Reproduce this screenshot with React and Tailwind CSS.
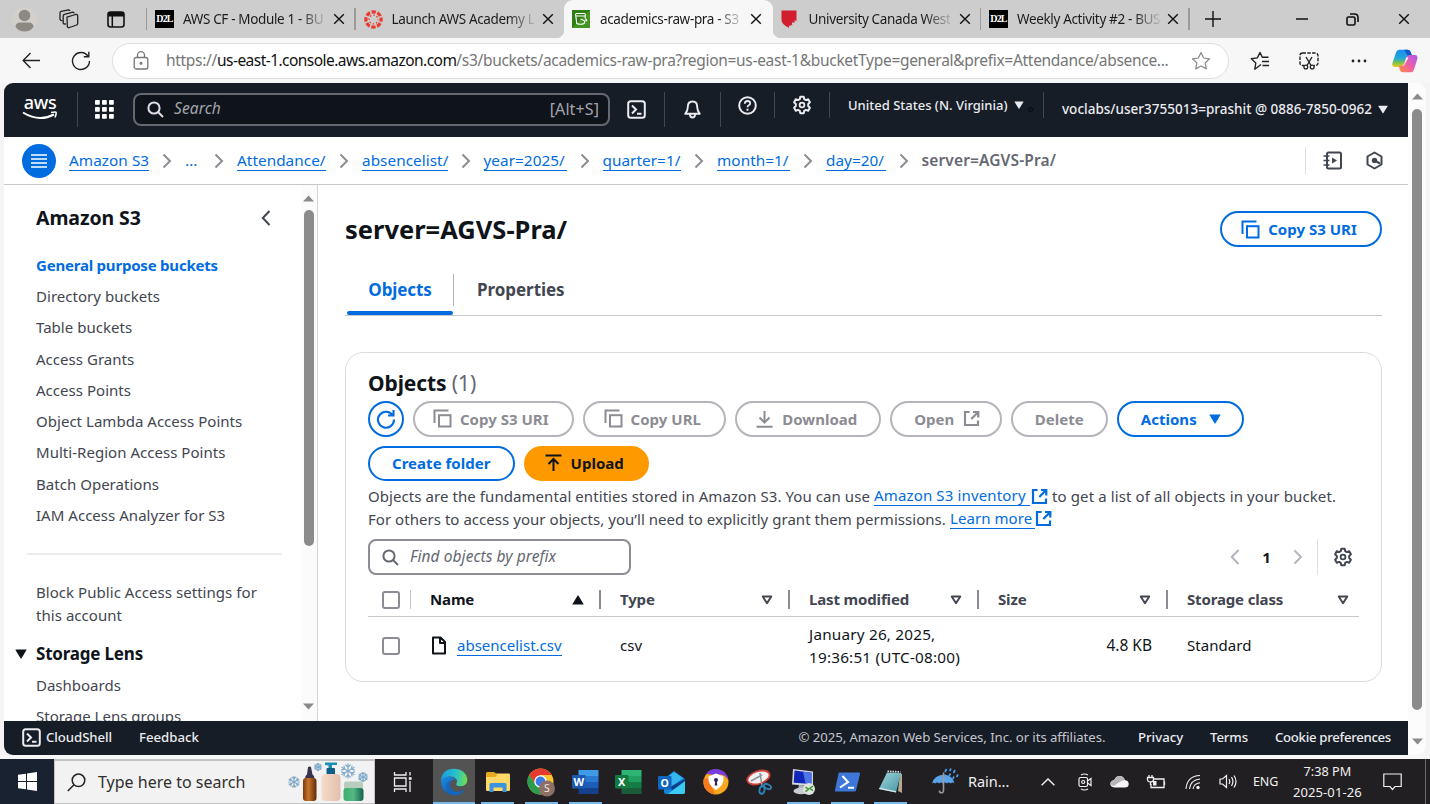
import React from "react";

const SANS = "font-['Noto_Sans','Open_Sans',sans-serif]";

/* ---------- shared icons ---------- */

function Svg({ w = 20, h, vb = "0 0 20 20", className = "", children }) {
  return (
    <svg
      width={w}
      height={h || w}
      viewBox={vb}
      fill="none"
      stroke="currentColor"
      strokeWidth="2"
      className={"shrink-0 " + className}
    >
      {children}
    </svg>
  );
}

const CloseX = ({ className = "" }) => (
  <Svg w={12} vb="0 0 12 12" className={className}>
    <path d="M1.2 1.2 L10.8 10.8 M10.8 1.2 L1.2 10.8" strokeWidth="1.4" />
  </Svg>
);

const Gear = ({ className = "" }) => (
  <Svg className={className}>
    <path
      d="M8.3 1.8h3.4l.5 2.3 1.7 1 2.3-.8 1.7 3-1.7 1.6v2.2l1.7 1.6-1.7 3-2.3-.8-1.7 1-.5 2.3H8.3l-.5-2.3-1.7-1-2.3.8-1.7-3 1.7-1.6V8.900L2.100 7.300l1.700-3 2.300.8 1.700-1z"
      strokeLinejoin="round"
    />
    <circle cx="10" cy="10" r="2.400" strokeWidth="1.800" />
  </Svg>
);

const CopyIcon = () => (
  <Svg w={19} vb="0 0 19 19">
    <path d="M1.500 14V1.500H15.500" />
    <rect x="6" y="6.200" width="11.500" height="11.300" />
  </Svg>
);

const ExternalIcon = ({ w = 17, className = "" }) => (
  <Svg w={w} vb="0 0 17 17" className={className}>
    <path d="M6.500 2H2v13h13v-4.500M10 2h5.300v5.500M15 2.200L8.300 9" strokeWidth="2.200" />
  </Svg>
);

const Caret = ({ className = "" }) => (
  <svg width="12" height="10" viewBox="0 0 12 10" fill="currentColor" className={"shrink-0 " + className}>
    <path d="M.8.5h10.400q.6 0 .3.600L6.500 9.300q-.5.700-1 0L.5 1.100Q.2.500.8.500z" />
  </svg>
);

const Terminal = ({ w = 19 }) => (
  <Svg w={w} vb="0 0 19 19">
    <rect x="1.200" y="1.200" width="16.600" height="16.600" rx="2.500" />
    <path d="M5 5.500l4 4-4 4M10 13.700h4.500" />
  </Svg>
);

const Magnifier = ({ className = "" }) => (
  <Svg w={17} vb="0 0 17 17" className={className}>
    <circle cx="7" cy="7" r="5.600" />
    <path d="M11 11l5 5" />
  </Svg>
);

/* ---------- browser tabs ---------- */

const D2L = () => (
  <span className="flex h-[18px] w-[19px] shrink-0 flex-col items-center justify-center bg-black font-['Liberation_Serif',serif] text-[10px] font-bold leading-none tracking-[-0.8px] text-white">
    D2L
  </span>
);

const CanvasLogo = () => (
  <Svg w={19} vb="0 0 20 20" className="text-[#ea3a2d]">
    <circle cx="10" cy="10" r="8" strokeWidth="3.400" strokeDasharray="4.600 1.683" strokeDashoffset="2.300" />
    <circle cx="10" cy="10" r="4.600" strokeWidth="1.500" strokeDasharray="1.500 2.112" strokeDashoffset=".75" />
  </Svg>
);

const BucketLogo = () => (
  <svg width="18" height="18" viewBox="0 0 18 18" className="shrink-0">
    <rect width="18" height="18" fill="#2f7d17" />
    <path d="M0 18L18 0v18z" fill="#52a32c" opacity=".6" />
    <g fill="none" stroke="#fff" strokeWidth="1.100">
      <rect x="3.500" y="3.500" width="10" height="2.500" rx="1.200" />
      <path d="M3.800 6l1 7.500q3.700 1.600 7.400 0l.5-3M13.300 6l-.3 2M8.500 9l4 1.800q2.500.6 2.300-.6-.3-1-1.800-1.800" />
    </g>
  </svg>
);

const ShieldLogo = () => (
  <svg width="16" height="18" viewBox="0 0 16 18" className="shrink-0">
    <path d="M.5.500h15v10.500l-2-.8.300 2.600-2.300-.6-.8 2 1 .9-3.500.6-.3 2Q.5 14.500.5 10z" fill="#d21f2f" />
  </svg>
);

function Tab({ icon, title, active, gap = "gap-[10px]", sep }) {
  return (
    <div className={"relative flex h-[38px] w-[208.5px] shrink-0 items-center pl-[8px] " + (active ? "rounded-t-[9px] bg-[#f7f7f7]" : "")}>
      {active && (
        <>
          <span className="absolute bottom-0 -left-[8px] h-[8px] w-[8px] bg-[radial-gradient(circle_at_0_0,#cdcdcd_8px,#f7f7f7_8.500px)]" />
          <span className="absolute bottom-0 -right-[8px] h-[8px] w-[8px] bg-[radial-gradient(circle_at_100%_0,#cdcdcd_8px,#f7f7f7_8.500px)]" />
        </>
      )}
      <div className={"flex items-center " + gap}>
        {icon}
        <span className="whitespace-nowrap bg-[linear-gradient(90deg,#1b1b1b_116px,#1b1b1b00_146px)] bg-clip-text text-[13.500px] leading-5 tracking-[-0.350px] text-transparent">
          {title}
        </span>
      </div>
      <CloseX className="ml-auto mr-[10.500px] text-[#111]" />
      {sep && <span className="absolute right-0 top-[8px] h-[22px] w-[1.500px] bg-[#9b9b9b]" />}
    </div>
  );
}

function TabStrip() {
  return (
    <div className="flex h-[38px] items-center bg-[#cdcdcd]">
      <div className="flex w-[147px] items-center">
        <svg width="25" height="25" viewBox="0 0 25 25" className="ml-[12px]">
          <circle cx="12.500" cy="12.500" r="12.200" fill="#d3d0cc" />
          <circle cx="12.500" cy="8.500" r="5.800" fill="#8c8884" />
          <path d="M3.500 20q0-4.500 5-4.500h8q5 0 5 4.500-3.500 4.500-9 4.500T3.500 20z" fill="#8c8884" />
        </svg>
        <Svg w={20} className="ml-[22px] text-[#222]">
          <g strokeWidth="1.300" strokeLinejoin="round">
            <path d="M8 8.200l8.500-2.700q2-.5 2.200 1.300v7.700q0 1.200-1 1.500l-7.200 2.500q-2 .5-2.200-1.300z" />
            <path d="M7 14.800l-1.300.2q-1.500 0-1.500-1.300V7q0-1.300 1.200-1.700l8.600-2.200q1 0 1.300 1.300" />
            <path d="M3.500 11.500q-2.200.3-2.500-1.200V4q0-1.200 1.200-1.600L9.500.8q1.300 0 1.500 1" />
          </g>
        </Svg>
        <svg width="18" height="17" viewBox="0 0 18 17" className="ml-[28px]">
          <rect x="1" y="1" width="16" height="15" rx="2.500" fill="none" stroke="#111" strokeWidth="1.600" />
          <path d="M1 4V3q0-2 2-2h12q2 0 2 2v2.500H1z" fill="#111" />
          <path d="M5.300 5v11" stroke="#111" strokeWidth="1.500" />
        </svg>
        <span className="ml-auto h-[22px] w-[1.500px] bg-[#9b9b9b]" />
      </div>
      <Tab icon={<D2L />} title="AWS CF - Module 1 - BU" gap="gap-[9px]" sep />
      <Tab icon={<CanvasLogo />} title="Launch AWS Academy L" gap="gap-[9px]" />
      <Tab icon={<BucketLogo />} title="academics-raw-pra - S3" active />
      <Tab icon={<ShieldLogo />} title="University Canada West" gap="gap-[12px]" sep />
      <Tab icon={<D2L />} title="Weekly Activity #2 - BUS" gap="gap-[9px]" sep />
      <Svg w={16} vb="0 0 16 16" className="ml-[15px] text-[#111]">
        <path d="M8 0v16M0 8h16" strokeWidth="1.400" />
      </Svg>
      <div className="ml-auto flex items-center text-[#111]">
        <Svg w={12} vb="0 0 12 12">
          <path d="M0 6h12" strokeWidth="1.500" />
        </Svg>
        <Svg w={13} vb="0 0 13 13" className="ml-[38px]">
          <rect x="1" y="4" width="8" height="8" rx="1.500" strokeWidth="1.600" />
          <path d="M4 1h4.500Q12 1 12 4.500V9" strokeWidth="1.600" />
        </Svg>
        <CloseX className="ml-[39px] mr-[20px]" />
      </div>
    </div>
  );
}

/* ---------- address bar ---------- */

function AddressBar() {
  return (
    <div className="flex h-[45px] items-center bg-[#f7f7f7] text-[#222]">
      <Svg w={19} vb="0 0 19 19" className="ml-[22px]">
        <path d="M18 9.500H1.200M8.500 2L1.200 9.500 8.500 17" strokeWidth="1.400" />
      </Svg>
      <Svg w={20} className="ml-[30px]">
        <path d="M17.200 5.500A8.500 8.500 0 1 0 18.500 10M17.800.8v5h-5" strokeWidth="1.400" />
      </Svg>
      <div className="ml-[21px] flex h-[36px] w-[1117px] items-center rounded-full border-[1.500px] border-[#dedede] bg-white">
        <svg width="16" height="19" viewBox="0 0 16 19" fill="none" stroke="#777" strokeWidth="1.300" className="ml-[20px] shrink-0">
          <rect x="1.200" y="6.500" width="13.600" height="11.500" rx="2" />
          <path d="M4.500 6.500V4.200a3.500 3.500 0 0 1 7 0v2.300" />
          <circle cx="8" cy="12.200" r=".9" fill="#777" />
        </svg>
        <div className="ml-[17px] w-[1008px] whitespace-nowrap text-[15.500px] tracking-[-0.300px] text-[#767676]">
          https://<span className="tracking-[-0.540px] text-[#111]">us-east-1.console.aws.amazon.com</span>
          /s3/buckets/academics-raw-pra?region=us-east-1&amp;bucketType=general&amp;prefix=Attendance/absence...
        </div>
        <Svg w={20} className="ml-[17px] text-[#888]">
          <path d="M10 1.500l2.600 5.500 6 .8-4.400 4.100 1.100 6L10 15l-5.300 2.900 1.100-6L1.400 7.800l6-.8z" strokeWidth="1.200" strokeLinejoin="round" />
        </Svg>
      </div>
      <Svg w={20} className="ml-[21px]">
        <path d="M11 13.500l-6.200 4.700 1-6.200L1.300 7.800l6-.9L10 1.500l2.300 4.700h6.200M12 10.500h7M12.500 14.500h6.500" strokeWidth="1.400" strokeLinejoin="round" />
      </Svg>
      <Svg w={20} className="ml-[29px]">
        <rect x="1" y="2" width="18" height="12.500" rx="2.500" strokeWidth="1.400" strokeDasharray="3.500 1.300" />
        <path d="M5 13h10v6H5z" fill="#f7f7f7" stroke="none" />
        <path d="M7 6l5 8.500M13 6l-5 8.500" strokeWidth="1.400" />
        <circle cx="6.800" cy="16" r="1.900" strokeWidth="1.300" />
        <circle cx="13.200" cy="16" r="1.900" strokeWidth="1.300" />
      </Svg>
      <svg width="16" height="4" viewBox="0 0 16 4" fill="#222" className="ml-[32px]">
        <circle cx="2" cy="2" r="1.400" />
        <circle cx="8" cy="2" r="1.400" />
        <circle cx="14" cy="2" r="1.400" />
      </svg>
      <svg width="26" height="24" viewBox="0 0 26 24" className="ml-[25px]">
        <defs>
          <linearGradient id="cpA" x1="0" y1="0" x2="0" y2="1">
            <stop offset="0" stopColor="#1a8df0" />
            <stop offset=".5" stopColor="#23a8d8" />
            <stop offset=".75" stopColor="#7cc24a" />
            <stop offset="1" stopColor="#f3c61c" />
          </linearGradient>
          <linearGradient id="cpB" x1="1" y1="0" x2="0" y2="1">
            <stop offset="0" stopColor="#a55cf0" />
            <stop offset=".5" stopColor="#ec5fa8" />
            <stop offset="1" stopColor="#ff8a3c" />
          </linearGradient>
        </defs>
        <path d="M7 .8h9q2 0 2.800 2.500L20 7h-3q-2.500 0-3.300 2.500L12 15q-1 3-4 3H3Q-.8 18 .8 13L4 3.500Q4.800.8 7 .8z" fill="url(#cpA)" />
        <path d="M12 .8h4q2 0 2.800 2.500L20 7h-3q-2 0-3-3T12 .8z" fill="#1657c8" />
        <path d="M19 23.300h-8q-2.500 0-3.200-2.500L7 17h2q2.500 0 3.300-2.500L14 9q1-3 4-3h5q3.500 0 2 5l-3 9.500q-.8 2.800-3 2.800z" fill="url(#cpB)" />
        <path d="M14.500 8.500h2L12 16.500H9.800q2 0 2.700-2z" fill="#fff" />
      </svg>
    </div>
  );
}

/* ---------- AWS console chrome ---------- */

const Rule = ({ className = "" }) => <span className={"w-px shrink-0 bg-[#424650] " + className} />;

function AwsHeader() {
  return (
    <header className="flex h-[54px] items-center rounded-tl-[9px] bg-[#161d26] pb-[2px] text-[#ebebf0]">
      <div className="ml-[18px] flex w-[36px] flex-col items-center">
        <span className="h-[13px] text-[18px] font-medium leading-[9px] tracking-[-0.300px] text-white">aws</span>
        <svg width="36" height="9" viewBox="0 0 36 9" fill="none" stroke="#fff">
          <path d="M1 1.500Q17 11.500 32 3.500" strokeWidth="2" />
          <path d="M29 1.500q5-1.200 5.200 0T33 6.500" strokeWidth="1.500" />
        </svg>
      </div>
      <Rule className="ml-[19px] h-[35px]" />
      <svg width="19" height="19" viewBox="0 0 19 19" fill="#fff" className="ml-[17px]">
        {[0, 7, 14].map((y) => [0, 7, 14].map((x) => <rect key={x + "-" + y} x={x} y={y} width="4.800" height="4.800" rx=".8" />))}
      </svg>
      <div className="ml-[19px] flex h-[33px] w-[477px] items-center rounded-[8px] border-2 border-[#656871] bg-[#0f141a] pl-[12px] pr-[9px]">
        <Magnifier className="text-[#dedee3]" />
        <span className="ml-[10px] text-[15.500px] italic tracking-[0.100px] text-[#a4a4ad]">Search</span>
        <span className="ml-auto text-[16px] tracking-[0.100px] text-[#a4a4ad]">[Alt+S]</span>
      </div>
      <div className="flex w-[54px] justify-center pr-px">
        <Terminal />
      </div>
      <Rule className="h-[35px]" />
      <div className="flex w-[55px] justify-center">
        <Svg w={19} vb="0 0 19 19">
          <path d="M9.500 1.500Q4.800 1.500 4.800 7q0 4-2.600 6.800h14.600Q14.200 11 14.200 7q0-5.500-4.700-5.500zM7 14.500q0 3 2.500 3t2.500-3" strokeWidth="1.900" strokeLinejoin="round" />
        </Svg>
      </div>
      <Rule className="h-[35px]" />
      <div className="flex items-center pb-[8px]">
        <div className="flex w-[53px] justify-center">
          <Svg w={19} vb="0 0 19 19">
            <circle cx="9.500" cy="9.500" r="8.300" />
            <path d="M6.800 7.800q0-2.800 2.700-2.800t2.700 2.300q0 1.300-1.400 2t-1.300 2" strokeWidth="1.800" />
            <path d="M9.500 12.700v2" />
          </Svg>
        </div>
        <Rule className="h-[26px]" />
        <div className="flex w-[54px] justify-center">
          <Gear />
        </div>
        <Rule className="h-[26px]" />
        <span className="ml-[18px] w-[166px] whitespace-nowrap text-[13px] font-medium leading-5">United States (N. Virginia)</span>
        <Caret className="h-[8px] w-[10px]" />
        <span className="ml-[4px] mt-[8px] h-[5px] w-[5px] rounded-full border border-[#05080c]" />
        <Rule className="ml-[10px] h-[26px]" />
      </div>
      <span className="ml-[18px] w-[316px] whitespace-nowrap text-[13.500px] font-medium tracking-[0.010px]">
        voclabs/user3755013=prashit @ 0886-7850-0962
      </span>
      <Caret className="h-[9px] w-[10px]" />
    </header>
  );
}

const Chevron = ({ className = "text-[#8c8c94]", left }) => (
  <Svg w={10} h={16} vb="0 0 10 16" className={className}>
    <path d={left ? "M8.500 1L1.800 8l6.700 7" : "M1.500 1.500L8 8l-6.500 6.500"} />
  </Svg>
);

const CRUMBS = [
  ["Amazon S3", "w-[80px]"],
  ["...", "w-[16px]"],
  ["Attendance/", "w-[89px]"],
  ["absencelist/", "w-[85.500px]"],
  ["year=2025/", "w-[83px]"],
  ["quarter=1/", "w-[78.500px]"],
  ["month=1/", "w-[73px]"],
  ["day=20/", "w-[59.500px]"],
];

function Breadcrumbs() {
  return (
    <div className="flex h-[48px] items-center border-b-[1.500px] border-[#c6c6cd] bg-white text-[15px]">
      <span className="ml-[18px] flex h-[34px] w-[34px] items-center justify-center rounded-full bg-[#006ce0] text-white">
        <Svg w={16} vb="0 0 16 16">
          <path d="M0 2h16M0 6h16M0 10h16M0 14h16" strokeWidth="1.700" />
        </Svg>
      </span>
      <nav className="ml-[13px] flex items-center gap-[13px]">
        {CRUMBS.map(([label, w]) => (
          <React.Fragment key={label}>
            <span className={w + " whitespace-nowrap text-[15.300px] leading-[19px] tracking-[0.050px] text-[#006ce0] " + (label === "..." ? "" : "border-b-[1.500px] border-[#006ce0]")}>
              {label}
            </span>
            <Chevron />
          </React.Fragment>
        ))}
        <span className="text-[15.500px] font-semibold tracking-[0.130px] text-[#656871]">server=AGVS-Pra/</span>
      </nav>
      <div className="ml-auto mr-[24px] flex items-center text-[#424650]">
        <span className="mr-[17px] h-[27px] w-px bg-[#dedee3]" />
        <Svg w={19} vb="0 0 19 19">
          <rect x="4" y="1.500" width="14" height="16" rx="1.500" />
          <path d="M.5 5h6M.5 9.500h6M.5 14h6" strokeWidth="1.700" />
          <path d="M9 6.500v6l5-3z" fill="currentColor" stroke="none" />
        </Svg>
        <Svg w={19} vb="0 0 19 19" className="ml-[23px]">
          <path d="M9.500 1.500l7 4v8l-7 4-7-4v-8z" strokeLinejoin="round" />
          <circle cx="9.500" cy="9.500" r="2.700" fill="currentColor" stroke="none" />
          <path d="M9.500 9.500l5.500 3" />
        </Svg>
      </div>
    </div>
  );
}

/* ---------- side navigation ---------- */

const LINKS = [
  "Directory buckets",
  "Table buckets",
  "Access Grants",
  "Access Points",
  "Object Lambda Access Points",
  "Multi-Region Access Points",
  "Batch Operations",
  "IAM Access Analyzer for S3",
];

function SideNav() {
  return (
    <aside className="flex h-[537px] w-[314px] shrink-0 border-r-[1.500px] border-[#d5d5db] bg-white text-[15px] text-[#424650]">
      <div className="h-full w-[297px] overflow-hidden whitespace-nowrap pl-[32px]">
        <div className="mt-[19px] flex h-[28px] items-center text-[#0f141a]">
          <h2 className="w-[225px] text-[19.500px] font-bold tracking-[-0.100px]">Amazon S3</h2>
          <Chevron left className="text-[#424650]" />
        </div>
        <ul className="mt-[17.500px] tracking-[0.030px]">
          <li className="flex h-[31.250px] items-center font-bold tracking-[-0.210px] text-[#006ce0]">General purpose buckets</li>
          {LINKS.map((l) => (
            <li key={l} className="flex h-[31.250px] items-center">
              {l}
            </li>
          ))}
        </ul>
        <hr className="-ml-[9px] mt-[22px] w-[255px] border-t-2 border-[#ebebf0]" />
        <p className="mt-[26.500px] leading-[22.300px] tracking-[0.050px]">
          Block Public Access settings for
          <br />
          this account
        </p>
        <div className="-ml-[21px] mt-[15px] flex h-[26px] items-center text-[#0f141a]">
          <Caret />
          <h3 className="ml-[9px] text-[17px] font-bold tracking-[-0.200px]">Storage Lens</h3>
        </div>
        <div className="mt-[3px] flex h-[31px] items-center">Dashboards</div>
        <div className="flex h-[31px] items-center">Storage Lens groups</div>
      </div>
      <div className="flex w-[16px] flex-col items-center bg-[#fbfbfb] pr-px">
        <svg width="11" height="7" viewBox="0 0 11 7" className="mt-[10px]">
          <path d="M0 6.500L5.500 .500 11 6.500z" fill="#8a8a8a" />
        </svg>
        <span className="mt-[8px] h-[336px] w-[10px] rounded-full bg-[#8b8b8b]" />
        <svg width="11" height="7" viewBox="0 0 11 7" className="mb-[12px] mt-auto">
          <path d="M0 .5L5.500 6.500 11 .5z" fill="#8a8a8a" />
        </svg>
      </div>
    </aside>
  );
}

/* ---------- main content ---------- */

function Pill({ className = "", tone = "off", children }) {
  const tones = {
    off: "border-[#b4b4bb] text-[#8c8c94]",
    on: "border-[#006ce0] text-[#006ce0]",
    primary: "border-[#ff9900] bg-[#ff9900] text-[#0f141a]",
  };
  return (
    <button
      className={
        "flex h-[35.500px] shrink-0 items-center justify-center whitespace-nowrap rounded-full border-2 text-[15px] font-bold tracking-[0.020px] " +
        tones[tone] +
        " " +
        className
      }
    >
      {children}
    </button>
  );
}

const SortDown = () => (
  <Svg w={12} h={10} vb="0 0 12 10" className="text-[#424650]">
    <path d="M1.700 1.500h8.600L6 8.200z" strokeWidth="1.900" strokeLinejoin="round" />
  </Svg>
);

const Checkbox = () => <span className="block h-[18px] w-[18px] rounded-[3px] border-2 border-[#8c8c94] bg-white" />;

const COLS = "grid grid-cols-[43px_190px_189px_189px_189px_191px]";

function HeadCell({ label, children, last, first }) {
  return (
    <div className="flex items-center pl-[19px]">
      <span className={"font-bold tracking-[-0.150px] " + (first ? "text-[#0f141a]" : "text-[#424650]")}>{label}</span>
      <span className={"ml-auto " + (last ? "mr-[10px]" : "mr-[15px]")}>{children}</span>
      {!last && <span className="h-[19px] w-[2px] bg-[#8c8c94]" />}
    </div>
  );
}

function ObjectsCard() {
  return (
    <section className="mt-[36px] h-[330px] w-[1037px] whitespace-nowrap rounded-[18px] border-[1.500px] border-[#dcdce0] pl-[22px] text-[15px]">
      <h2 className="mt-[16px] h-[28px] text-[21px] font-bold leading-[28px] tracking-[-0.100px] text-[#0f141a]">
        Objects <span className="font-normal text-[#656871]">(1)</span>
      </h2>
      <div className="mt-[4px] flex gap-[9px]">
        <Pill tone="on" className="w-[35.500px]">
          <Svg w={20}>
            <path d="M16.800 6.500A8 8 0 1 0 18 10.500M17.500 1v5.500h-5.500" strokeWidth="2.100" />
          </Svg>
        </Pill>
        <Pill className="w-[161.500px] gap-[8px] pr-[5px]">
          <CopyIcon /> Copy S3 URI
        </Pill>
        <Pill className="w-[142.500px] gap-[8px] pr-[4px]">
          <CopyIcon /> Copy URL
        </Pill>
        <Pill className="w-[146.500px] gap-[9px] pr-[2px]">
          <Svg w={17} h={18} vb="0 0 17 18">
            <path d="M8.500 1v11M3.500 7.500l5 5 5-5M.5 16.800h16" />
          </Svg>
          Download
        </Pill>
        <Pill className="w-[111.500px] gap-[9px] pl-[3px]">
          Open <ExternalIcon />
        </Pill>
        <Pill className="w-[97.500px]">Delete</Pill>
        <Pill tone="on" className="w-[126.500px] gap-[12px] pl-px">
          Actions <Caret />
        </Pill>
      </div>
      <div className="mt-[9px] flex gap-[9px]">
        <Pill tone="on" className="w-[146.500px]">
          Create folder
        </Pill>
        <Pill tone="primary" className="w-[125.500px] gap-[9px] pr-[4px]">
          <Svg w={17} h={18} vb="0 0 17 18">
            <path d="M.5 1.500h16M8.500 17V5.500M3.500 10l5-5 5 5" />
          </Svg>
          Upload
        </Pill>
      </div>
      <div className="mt-[4px] tracking-[0.070px] text-[#424650]">
        <div className="flex h-[22.500px] items-center">
          <span className="w-[506px]">Objects are the fundamental entities stored in Amazon S3. You can use</span>
          <a className="w-[156px] border-b-[1.500px] border-[#006ce0] leading-[19px] tracking-[0.150px] text-[#006ce0]">Amazon S3 inventory</a>
          <ExternalIcon className="ml-px mr-[4px] text-[#006ce0]" />
          <span className="tracking-[0.110px]">to get a list of all objects in your bucket.</span>
        </div>
        <div className="flex h-[22.500px] items-center">
          <span className="w-[582px] tracking-[0.040px]">For others to access your objects, you’ll need to explicitly grant them permissions.</span>
          <a className="w-[85px] border-b-[1.500px] border-[#006ce0] leading-[19px] text-[#006ce0]">Learn more</a>
          <ExternalIcon className="text-[#006ce0]" />
        </div>
      </div>
      <div className="mt-[9px] flex items-center">
        <div className="flex h-[35.500px] w-[263px] items-center rounded-[8px] border-2 border-[#8c8c94] pl-[12px]">
          <Magnifier className="text-[#656871]" />
          <span className="ml-[11px] text-[15.500px] italic tracking-[0.070px] text-[#656871]">Find objects by prefix</span>
        </div>
        <div className="ml-auto mr-[28px] flex items-center text-[#b4b4bb]">
          <Chevron left className="text-[#b4b4bb]" />
          <span className="w-[53px] text-center font-bold text-[#0f141a]">1</span>
          <Chevron className="text-[#b4b4bb]" />
          <span className="ml-[14px] h-[36px] w-px bg-[#dedee3]" />
          <Gear className="ml-[15px] text-[#424650]" />
        </div>
      </div>
      <div className="mt-[8px] w-[991px]">
        <div className={COLS + " h-[34px] items-center border-b-[1.500px] border-[#c6c6cd]"}>
          <div className="flex items-center pl-[14px]">
            <Checkbox />
            <span className="ml-auto h-[19px] w-[1.500px] bg-[#c6c6cd]" />
          </div>
          <HeadCell label="Name" first>
            <Caret className="rotate-180 text-[#0f141a]" />
          </HeadCell>
          <HeadCell label="Type">
            <SortDown />
          </HeadCell>
          <HeadCell label="Last modified">
            <SortDown />
          </HeadCell>
          <HeadCell label="Size">
            <SortDown />
          </HeadCell>
          <HeadCell label="Storage class" last>
            <SortDown />
          </HeadCell>
        </div>
        <div className={COLS + " h-[57px] items-center text-[#0f141a]"}>
          <div className="pl-[14px]">
            <Checkbox />
          </div>
          <div className="flex items-center pl-[20px]">
            <Svg w={16} h={19} vb="0 0 16 19">
              <path d="M2 1.500h7.500L14 6v11.500H2zM9 1.500V7h5" strokeLinejoin="round" />
            </Svg>
            <a className="ml-[10px] w-[105px] border-b-[1.500px] border-[#006ce0] leading-[19px] text-[#006ce0]">absencelist.csv</a>
          </div>
          <div className="pl-[19px]">csv</div>
          <div className="pl-[19px] text-[15.300px] leading-[22.300px] tracking-[0.200px]">
            January 26, 2025,
            <br />
            19:36:51 (UTC-08:00)
          </div>
          <div className="pr-[16px] text-right text-[15.500px]">4.8 KB</div>
          <div className="pl-[19px] tracking-[0.060px]">Standard</div>
        </div>
      </div>
    </section>
  );
}

function Main() {
  return (
    <main className="min-w-0 flex-1 overflow-hidden bg-white pl-[27px]">
      <div className="mt-[26px] flex h-[36px] w-[1037px] items-center justify-between">
        <h1 className="text-[25.500px] font-bold text-[#0f141a]">server=AGVS-Pra/</h1>
        <Pill tone="on" className="w-[162px] gap-[8px] pr-[4px]">
          <CopyIcon /> Copy S3 URI
        </Pill>
      </div>
      <div className="mt-[17px] flex h-[52px] w-[1037px] border-b-[1.500px] border-[#c6c6cd] pl-[2px] text-[17px] font-bold tracking-[-0.050px]">
        <div className="relative h-[51px] w-[106px] pt-[14px] text-center leading-[24px] tracking-[-0.100px] text-[#006ce0]">
          Objects
          <span className="absolute inset-x-0 bottom-0 h-[4px] rounded-sm bg-[#006ce0]" />
        </div>
        <span className="mt-[10px] h-[32px] w-px bg-[#b4b4bb]" />
        <div className="pl-[23px] pt-[14px] leading-[24px] text-[#424650]">Properties</div>
      </div>
      <ObjectsCard />
    </main>
  );
}

function Footer() {
  return (
    <footer className="flex h-[34px] items-center whitespace-nowrap rounded-bl-[9px] bg-[#161d26] text-[13.200px] text-[#ebebf0]">
      <span className="ml-[18px] flex items-center font-medium">
        <Terminal />
        <span className="ml-[5px] w-[93px] tracking-[-0.060px]">CloudShell</span>
      </span>
      <span className="font-medium">Feedback</span>
      <span className="ml-auto w-[339.500px] tracking-[-0.070px] text-[#c6c6cd]">© 2025, Amazon Web Services, Inc. or its affiliates.</span>
      <span className="w-[72px] font-medium">Privacy</span>
      <span className="w-[65px] font-medium tracking-[-0.100px]">Terms</span>
      <span className="w-[133px] font-medium tracking-[-0.300px]">Cookie preferences</span>
    </footer>
  );
}

/* ---------- Windows taskbar ---------- */

const Flake = ({ x, y, r }) => (
  <g transform={`translate(${x} ${y})`} stroke="#7fa9c9" strokeWidth="1.200" fill="none">
    {[0, 60, 120].map((a) => (
      <path
        key={a}
        transform={`rotate(${a})`}
        d={`M0 ${-r}V${r}M${-r * 0.35} ${-r * 0.85}L0 ${-r * 0.5}L${r * 0.35} ${-r * 0.85}M${-r * 0.35} ${r * 0.85}L0 ${r * 0.5}L${r * 0.35} ${r * 0.85}`}
      />
    ))}
  </g>
);

const SearchArt = () => (
  <svg width="82" height="42" viewBox="0 0 82 42" className="-ml-[2px] -mt-[2px]">
    <defs>
      <linearGradient id="amber">
        <stop offset="0" stopColor="#7a3a0c" />
        <stop offset=".4" stopColor="#c8752a" />
        <stop offset="1" stopColor="#5e2a08" />
      </linearGradient>
      <linearGradient id="cream">
        <stop offset="0" stopColor="#f6dcc8" />
        <stop offset="1" stopColor="#e2bfae" />
      </linearGradient>
      <linearGradient id="jar">
        <stop offset="0" stopColor="#3fae6b" />
        <stop offset=".5" stopColor="#54b884" />
        <stop offset="1" stopColor="#13624a" />
      </linearGradient>
    </defs>
    <Flake x={7} y={22} r={6} />
    <Flake x={31} y={7} r={4} />
    <Flake x={61} y={11} r={7.5} />
    <Flake x={76} y={17} r={5} />
    <path d="M21 7q2-1 3 0l1.500 7.500q2 1 2 4h-9.500q0-3 2-4z" fill="#3a3350" />
    <rect x="16" y="18" width="13.500" height="23" rx="3" fill="url(#amber)" />
    <path d="M38 2.500h12v2.500h-5v4h-3.500V5.500L38 5z" fill="#1d8fb5" />
    <rect x="39.500" y="8" width="8.500" height="7" rx="1" fill="#0d5f86" />
    <rect x="34.500" y="14" width="19" height="27" rx="4" fill="url(#cream)" />
    <rect x="57" y="21.500" width="19" height="9" rx="2" fill="#b9cdbf" />
    <rect x="56.500" y="28" width="20" height="13" rx="3" fill="url(#jar)" />
  </svg>
);

const EdgeIcon = () => (
  <svg width="28" height="28" viewBox="0 0 28 28">
    <defs>
      <linearGradient id="edA" x1="0" y1=".3" x2="1" y2=".4">
        <stop offset="0" stopColor="#1a9be0" />
        <stop offset=".6" stopColor="#2cc3c9" />
        <stop offset="1" stopColor="#6fdc4c" />
      </linearGradient>
      <linearGradient id="edB" x1="0" y1="0" x2=".8" y2="1">
        <stop offset="0" stopColor="#1e8fe0" />
        <stop offset="1" stopColor="#0c4fa5" />
      </linearGradient>
    </defs>
    <path d="M.8 13Q2 .8 14 .8 25.500 1.200 27.300 11q.5 7-6.800 7.200-5.500-.2-4-3 1.500-2.200-.3-4.300Q14 8.200 9.500 8.500 4 9 .8 13z" fill="url(#edA)" />
    <path d="M.8 13Q3.500 8 9.500 8.500q4.500.3 6.500 3-5.500-.5-6.500 5 .2 6 7 7.500 4 .3 8-2.300Q20.500 27.500 14 27.300 1.500 26 .8 13z" fill="url(#edB)" />
    <path d="M11 12.300Q4 15 6.500 21.500q2.500 4.800 8 5.800 6.500 0 10-5.600-4 2.300-8 2.300-6.500-1.500-7-7.500.2-2.700 1.500-4.200z" fill="#1668bd" />
  </svg>
);

const FolderIcon = () => (
  <svg width="26" height="22" viewBox="0 0 26 22">
    <path d="M1 3q0-2 2-2h6l2.500 2.500H1z" fill="#d9960f" />
    <rect x="1" y="2.500" width="24" height="17.500" rx="1.200" fill="#ffd868" />
    <path d="M1 3v3h9.500l2-2.500H11L9 1H3Q1 1 1 3z" fill="#e8a91c" />
    <path d="M4.500 21v-7.500q0-1.500 1.500-1.500h14q1.500 0 1.500 1.500V21h-4v-4.500h-9V21z" fill="#3a93dc" />
  </svg>
);

const ChromeIcon = () => (
  <svg width="28" height="29" viewBox="0 0 28 29">
    <circle cx="13.500" cy="13.500" r="13" fill="#f9c22e" />
    <path d="M2.200 7A13 13 0 0 1 24.800 7H13.500L8.500 16.500z" fill="#e33b2e" />
    <path d="M2.200 7A13 13 0 0 0 13.500 26.500L18 17l-9.500-.5z" fill="#2a9d4c" />
    <circle cx="13.500" cy="13.500" r="6.200" fill="#fff" />
    <circle cx="13.500" cy="13.500" r="4.900" fill="#3a7be8" />
    <circle cx="20" cy="20.500" r="8" fill="#8e6f66" />
    <text x="20" y="24.300" textAnchor="middle" fontSize="10.500" fill="#f0e8e4" fontFamily="Noto Sans, sans-serif">
      S
    </text>
  </svg>
);

function OfficeIcon({ letter, rows, badge }) {
  return (
    <svg width="27" height="24" viewBox="0 0 27 24">
      {rows.map((c, i) => (
        <rect key={c} x="6.500" y={i * 6} width="20" height="6.100" fill={c} />
      ))}
      <rect x="0" y="5" width="13.500" height="13.500" rx="1" fill={badge} />
      <text x="6.700" y="15.800" textAnchor="middle" fontSize="11" fontWeight="bold" fill="#fff" fontFamily="Noto Sans, sans-serif">
        {letter}
      </text>
    </svg>
  );
}

const OutlookIcon = () => (
  <svg width="28" height="25" viewBox="0 0 28 25">
    <path d="M6 9L16 1l11 8v13q0 2-2 2H8q-2 0-2-2z" fill="#1484d8" />
    <path d="M8 8l8-6 9 6-12 9z" fill="#35b5ee" />
    <path d="M27 9v4L14 20l-2-3z" fill="#0b3f86" />
    <path d="M27 11v11q0 2-2 2H10z" fill="#3ccbf5" />
    <rect x="0" y="6" width="13.500" height="13.500" rx="1" fill="#0f66c0" />
    <text x="6.700" y="16.600" textAnchor="middle" fontSize="10.500" fontWeight="bold" fill="#fff" fontFamily="Noto Sans, sans-serif">
      O
    </text>
  </svg>
);

const ShieldBrowserIcon = () => (
  <svg width="26" height="26" viewBox="0 0 26 26">
    <circle cx="13" cy="13" r="12.500" fill="#f8a81c" />
    <path d="M3 5A12.500 12.500 0 0 1 25.300 11Q21 4 13 6z" fill="#7a3be0" />
    <path d="M1 9A12.500 12.500 0 0 0 12 25.500L6 10z" fill="#f47a1c" />
    <path d="M13 4.500l7.500 3q1 9-7.500 13.500Q4.500 16.500 5.500 7.500z" fill="#fff" />
    <circle cx="13" cy="11" r="2" fill="#2b2350" />
    <path d="M12.200 12h1.600l.5 4.500h-2.600z" fill="#2b2350" />
  </svg>
);

const SnipIcon = () => (
  <svg width="27" height="27" viewBox="0 0 27 27">
    <ellipse cx="12.500" cy="8.500" rx="11.500" ry="6.300" transform="rotate(-18 12.500 8.500)" fill="#f1f1f1" stroke="#d2403c" strokeWidth="1.800" />
    <path d="M14 4L16 17M5 12l11-6" stroke="#8e9499" strokeWidth="1.500" />
    <g fill="none" stroke="#2d83b8" strokeWidth="1.900">
      <ellipse cx="16" cy="21" rx="2.500" ry="3.800" transform="rotate(10 16 21)" />
      <ellipse cx="21.500" cy="17.500" rx="3.800" ry="2.200" transform="rotate(25 21.500 17.500)" />
    </g>
  </svg>
);

const RemoteIcon = () => (
  <svg width="27" height="28" viewBox="0 0 27 28">
    <path d="M3 1l20 2.500V18L2 16.500z" fill="#d6d9de" />
    <path d="M4.500 2.500l17 2.200V16L3.700 14.800z" fill="#1026b8" />
    <path d="M13 3.700l8.500 1V16l-6-.5z" fill="#4f74e6" />
    <path d="M9 17l7 .6 1 3.400H8z" fill="#aeb3ba" />
    <ellipse cx="11" cy="23" rx="7.500" ry="3.200" fill="#c9cdd2" />
    <circle cx="19" cy="21" r="6" fill="#dfe3df" />
    <path d="M15.500 19l3 2.300-3 2.400M23 18l-3.200 2.300 3.200 2.400" fill="none" stroke="#3f9a33" strokeWidth="1.500" />
  </svg>
);

const PowerShellIcon = () => (
  <svg width="27" height="22" viewBox="0 0 27 22">
    <path d="M5.500 1.500H25q1.500 0 1 1.500l-4 16.500q-.3 1-1.500 1H2q-1.500 0-1-1.500L4.500 2.500q.2-1 1-1z" fill="#3d78d8" />
    <path d="M8.500 5l5.500 6-8 5.500M14 16.700h6" fill="none" stroke="#fff" strokeWidth="2.100" />
  </svg>
);

const NotepadIcon = () => (
  <svg width="26" height="25" viewBox="0 0 26 25">
    <defs>
      <linearGradient id="np" x1="0" y1="0" x2="1" y2="1">
        <stop offset="0" stopColor="#9fd6dc" />
        <stop offset="1" stopColor="#4595a3" />
      </linearGradient>
    </defs>
    <path d="M22 3l2 1v19l-4-2z" fill="#b4a890" />
    <path d="M9 2.500L23 3l-5 19.500L1 19z" fill="url(#np)" />
    <path d="M9.500 1.200l13 .800" stroke="#dfe6e8" strokeWidth="1.600" strokeDasharray="1.500 1" />
    <path d="M1 19l17 3.500.2-1.300L1.500 17.700z" fill="#d8ecee" />
  </svg>
);

const APPS = [
  { icon: <EdgeIcon />, active: true },
  { icon: <FolderIcon />, open: true },
  { icon: <ChromeIcon />, open: true },
  { icon: <OfficeIcon letter="W" rows={["#3f9be8", "#2a7bd0", "#1d5cb8", "#15408c"]} badge="#1b59b3" />, open: true },
  { icon: <OfficeIcon letter="X" rows={["#2fb573", "#22a060", "#157c45", "#1a5c38"]} badge="#107a41" /> },
  { icon: <OutlookIcon /> },
  { icon: <ShieldBrowserIcon /> },
  { icon: <SnipIcon /> },
  { icon: <RemoteIcon />, open: true },
  { icon: <PowerShellIcon />, open: true },
  { icon: <NotepadIcon />, open: true },
];

function Taskbar() {
  return (
    <div className="flex h-[45px] items-stretch bg-[#211f22] text-[#f0f0f0]">
      <div className="flex w-[54px] items-center justify-center bg-[#182230]">
        <svg width="19" height="19" viewBox="0 0 19 19" fill="#fff">
          <path d="M0 2.800L8 1.700V9H0zM9 1.500L19 0v9H9zM0 10h8v7.300L0 16.200zM9 10h10v9L9 17.500z" />
        </svg>
      </div>
      <div className="flex w-[321px] items-center border border-t-2 border-[#c4c4c4] bg-[#f2f2f2]">
        <Svg w={19} vb="0 0 19 19" className="ml-[12px] text-[#222]">
          <circle cx="11.500" cy="7.300" r="6.300" strokeWidth="1.500" />
          <path d="M7 11.800L.8 18" strokeWidth="1.500" />
        </Svg>
        <span className="ml-[12px] w-[191px] whitespace-nowrap text-[16px] text-[#2f2f2f]">Type here to search</span>
        <SearchArt />
      </div>
      <div className="flex w-[58px] items-center justify-center pr-[3px]">
        <Svg w={20} vb="0 0 20 20">
          <path d="M1.500 0v3h11.500V0M1.500 20v-3h11.500v3M1.500 6h11.500v8H1.500zM17 0v3.500M17 9v11" strokeWidth="1.300" />
          <path d="M15.800 5.200h2.800v2.600h-2.800z" fill="currentColor" stroke="none" />
        </Svg>
      </div>
      <div className="flex gap-[1.700px]">
        {APPS.map((a, i) => (
          <div key={i} className={"flex w-[42px] flex-col items-center " + (a.active ? "bg-[#545354]" : "")}>
            <div className="flex flex-1 items-center pt-[3px]">{a.icon}</div>
            <span className={"h-[2px] " + (a.active ? "w-full bg-[#76b9ed]" : a.open ? "w-[33px] bg-[#76b9ed]" : "w-0")} />
          </div>
        ))}
      </div>
      <svg width="27" height="27" viewBox="0 0 27 27" className="ml-[20px] mt-[9px]">
        <path d="M0 15.500Q2 7 13 6.500 21 8 22.500 15.500q-2-2-4 0-2-2-3.500 0-2-2-4 0-2-2-3.800 0-2-2-4 0-1-1.500-3.200 0z" fill="#5aa3e8" />
        <path d="M11.500 4.500v18q-.2 2.500-2.500 2.300-1.700-.3-1.500-2.300" fill="none" stroke="#9a9a9a" strokeWidth="1.600" />
        <path d="M14.500 1l-1.500 3M19 .5l-1.300 2.500M18.500 5.500L17 8M23 2l-1.500 3M26 6.500L24.500 9M22 8.500l-1.300 2.500" stroke="#4a9be8" strokeWidth="1.700" />
      </svg>
      <span className="ml-[9px] w-[73px] self-center whitespace-nowrap text-[14.500px]">Rain...</span>
      <div className="flex items-center">
        <Svg w={14} h={8} vb="0 0 14 8">
          <path d="M.6 7.300L7 1l6.400 6.300" strokeWidth="1.400" />
        </Svg>
        <Svg w={14} h={18} vb="0 0 14 18" className="ml-[23px]">
          <g strokeWidth="1.200">
            <rect x="1" y="4.500" width="8.500" height="9" rx="1.500" />
            <path d="M9.500 8L13 5.500v7L9.500 10M3 2q3.500-2 7 0M3 16q3.500 2 7 0" />
            <circle cx="5.200" cy="9" r="1.500" />
          </g>
        </Svg>
        <svg width="19" height="13" viewBox="0 0 19 13" className="ml-[18px]">
          <path d="M4.500 12.500Q0 12 .3 8.500.8 5.500 4 5.200 6 .5 10.500 1q3.500.8 4.200 4 4 .5 4 4t-4 3.500z" fill="#f5f5f5" />
          <path d="M.5 8.500Q1 5.500 4 5.200 6 .5 10.500 1q3.500.8 4.200 4Q10 6 4 11 1 10.500.5 8.500z" fill="#b7b7b7" />
        </svg>
        <Svg w={20} h={14} vb="0 0 20 14" className="ml-[17px]">
          <g strokeWidth="1.300">
            <path d="M8 4h10v8.500H5V9M18.500 6.500v3.500" />
            <path d="M3 0v2.500M6 0v2.500M1.500 2.500h6v2q0 2.500-3 2.500t-3-2.500zM4.500 7v3" />
            <path d="M7 6h3.500v4.500H7z" fill="currentColor" stroke="none" />
          </g>
        </Svg>
        <Svg w={16} h={16} vb="0 0 16 16" className="ml-[19px]">
          <path d="M1 15Q2 2 15 1.500M4.500 15Q5.500 6 15 5M8 15q.8-5.500 7-6.300" strokeWidth="1.100" />
          <circle cx="13" cy="13.500" r="1.700" fill="currentColor" stroke="none" />
        </Svg>
        <Svg w={18} h={15} vb="0 0 18 15" className="ml-[18px]">
          <path d="M1 5h2.500L7.500 1.500v12L3.500 10H1zM10 5q1.500 2.500 0 5M12.500 3.200q2.800 4.300 0 8.600M15 1.500q4 6 0 12" strokeWidth="1.200" />
        </Svg>
        <span className="ml-[16px] mt-[2px] w-[34px] text-[12.500px]">ENG</span>
        <div className="w-[81px] text-center leading-[20.500px]">
          <div className="text-[12.700px]">7:38 PM</div>
          <div className="whitespace-nowrap text-[13px] tracking-[0.080px]">2025-01-26</div>
        </div>
        <Svg w={19} h={18} vb="0 0 19 18" className="ml-[15px]">
          <path d="M.8 1h17.400v12.500H12L9.500 16.500 7 13.500H.8z" strokeWidth="1.200" />
        </Svg>
      </div>
      <span className="ml-auto mr-[4px] w-px bg-[#6c6c6c]" />
    </div>
  );
}

/* ---------- page ---------- */

function PageScrollbar() {
  return (
    <div className="mr-[4px] flex w-[18px] flex-col items-center rounded-r-[9px] bg-[#fcfcfc]">
      <svg width="11" height="7" viewBox="0 0 11 7" className="mt-[10px]">
        <path d="M0 6.500L5.500 .5 11 6.500z" fill="#8a8a8a" />
      </svg>
      <span className="mt-[9px] h-[601px] w-[10px] rounded-full bg-[#8b8b8b]" />
      <svg width="11" height="7" viewBox="0 0 11 7" className="mt-auto mb-[10px]">
        <path d="M0 .5L5.500 6.500 11 .5z" fill="#8a8a8a" />
      </svg>
    </div>
  );
}

export default function App() {
  return (
    <div className={"flex h-[804px] w-[1430px] flex-col overflow-hidden bg-[#f4f4f4] " + SANS}>
      <TabStrip />
      <AddressBar />
      <div className="flex h-[672px] pl-[4px]">
        <div className="flex w-[1404px] flex-col">
          <AwsHeader />
          <Breadcrumbs />
          <div className="flex h-[536px]">
            <SideNav />
            <Main />
          </div>
          <Footer />
        </div>
        <PageScrollbar />
      </div>
      <div className="h-[4px] bg-[#f7f7f7]" />
      <Taskbar />
    </div>
  );
}
